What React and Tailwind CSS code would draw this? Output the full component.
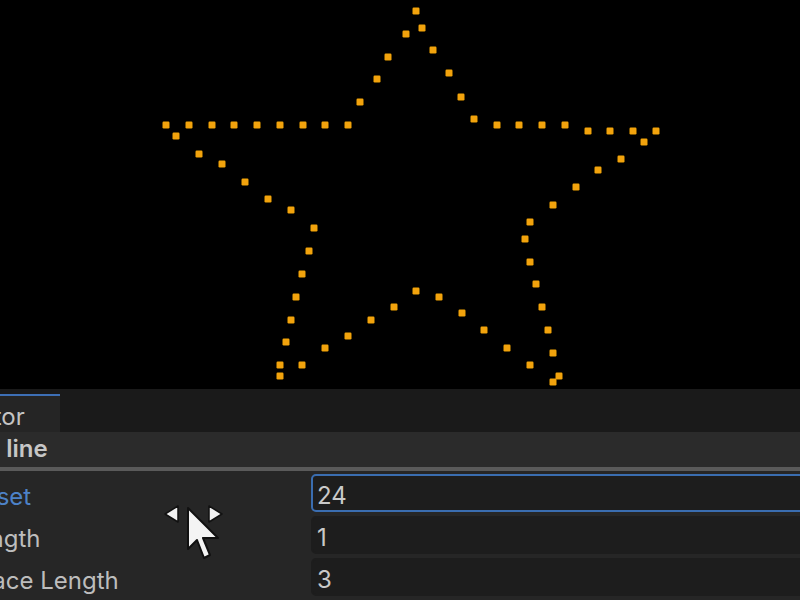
import React from "react";

// Dot positions tracing the dashed star outline on the preview canvas.
const DOTS = [
  [416, 11], [406, 34], [388, 57], [377, 79], [360, 102], [348, 125],
  [422, 28], [433, 50], [449, 73], [461, 97], [474, 119],
  [325, 125], [303, 125], [280, 125], [257, 125], [234, 125], [212, 125], [189, 125], [166, 125],
  [176, 136], [199, 154], [222, 164], [245, 182], [268, 199], [291, 210], [314, 228],
  [309, 251], [302, 274], [296, 297], [291, 320], [286, 342], [280, 365], [280, 376],
  [302, 365], [325, 348], [348, 336], [371, 320], [394, 307], [416, 291],
  [439, 297], [462, 313], [484, 330], [507, 348], [530, 365],
  [553, 382], [559, 376], [553, 353], [548, 330], [542, 307], [536, 284], [530, 262], [525, 239], [530, 222],
  [553, 205], [576, 187], [598, 170], [621, 159], [644, 142], [656, 131],
  [633, 131], [610, 131], [588, 131], [565, 125], [542, 125], [519, 125], [497, 125],
];

function StarCanvas() {
  return (
    <div className="h-[389px] bg-black shrink-0">
      <svg width="800" height="389" viewBox="0 0 800 389" className="block">
        <defs>
          <filter id="soft" x="-50%" y="-50%" width="200%" height="200%">
            <feGaussianBlur stdDeviation="0.6" />
          </filter>
        </defs>
        <g filter="url(#soft)">
          {DOTS.map(([x, y], i) => (
            <rect key={i} x={x - 3.5} y={y - 3.5} width="7" height="7" rx="1.2" fill="#f2a30b" />
          ))}
        </g>
      </svg>
    </div>
  );
}

function Field({ label, value, active }) {
  return (
    <div className="flex items-center h-[38px] ml-[-38px] mr-[-40px]">
      <div className={`w-[349px] shrink-0 pt-[7px] ${active ? "text-[#4d82c8]" : "text-[#bdbdbd]"}`}>{label}</div>
      <div
        className={`flex-1 h-full flex items-center pl-[4px] pt-[5px] rounded-[5px] bg-[#1d1d1d] text-[#c9c9c9] ${
          active ? "border-2 border-[#3a6db0]" : "border-2 border-[#1d1d1d]"
        }`}
      >
        {value}
      </div>
    </div>
  );
}

function Cursor() {
  return (
    <svg
      className="absolute left-[160px] top-[500px]"
      width="70"
      height="70"
      viewBox="0 0 70 70"
    >
      {/* resize arrows */}
      <path d="M5 14 L18 6 L18 22 Z" fill="#f2f2f2" stroke="#111" strokeWidth="1.5" strokeLinejoin="round" />
      <path d="M62 14 L49 6 L49 22 Z" fill="#f2f2f2" stroke="#111" strokeWidth="1.5" strokeLinejoin="round" />
      {/* pointer */}
      <path
        d="M28 8 L28 49 L37 40 L44 58 L50 55 L43 38 L58 38 Z"
        fill="#f4f4f4"
        stroke="#111"
        strokeWidth="2"
        strokeLinejoin="round"
      />
    </svg>
  );
}

export default function App() {
  return (
    <div
      className="relative w-[800px] h-[600px] overflow-hidden flex flex-col bg-[#262626] text-[24px] leading-none"
      style={{ fontFamily: "Inter, 'Noto Sans', sans-serif" }}
    >
      <StarCanvas />

      {/* tab strip */}
      <div className="h-[43px] shrink-0 bg-[#1a1a1a] flex items-end">
        <div className="h-[38px] ml-[-90px] pr-[35px] pl-[8px] pt-[5px] flex items-center bg-[#252525] border-t-2 border-[#3d6fb5] text-[#c4c4c4]">
          Inspector
        </div>
      </div>

      {/* component header */}
      <div className="h-[39px] shrink-0 bg-[#2b2b2b] flex items-center pb-[2px] border-b-[4px] border-[#5a5a5a]">
        <span className="ml-[-88px] font-semibold text-[#c6c6c6]">Dashed line</span>
      </div>

      {/* properties */}
      <div className="flex flex-col gap-[4px] pt-[3px] bg-[#262626]">
        <Field label="Offset" value="24" active />
        <Field label="Length" value="1" />
        <Field label="Space Length" value="3" />
      </div>

      <Cursor />
    </div>
  );
}
